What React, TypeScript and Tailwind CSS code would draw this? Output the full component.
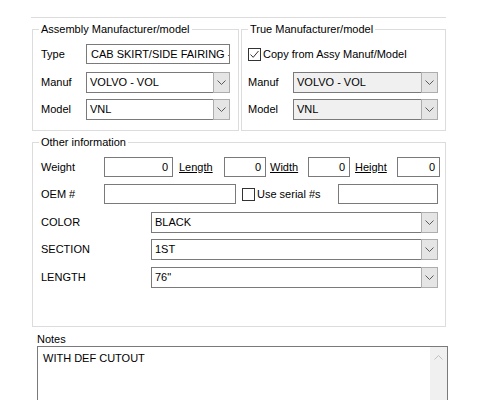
import type { ReactNode } from "react";

// Little down-chevron used by the combo buttons
function Chevron({ up = false }: { up?: boolean }) {
  return (
    <svg width="9" height="5" viewBox="0 0 9 5" className={up ? "rotate-180" : ""}>
      <path d="M0.5 0.5 L4.5 4.5 L8.5 0.5" fill="none" stroke="currentColor" strokeWidth="1" />
    </svg>
  );
}

function TextBox({ value = "", className = "", align = "left" }: { value?: string; className?: string; align?: "left" | "right" }) {
  return (
    <div
      className={`h-[20px] border border-[#7a7a7a] bg-white flex items-center px-[4px] whitespace-nowrap overflow-hidden ${
        align === "right" ? "justify-end" : ""
      } ${className}`}
    >
      {value}
    </div>
  );
}

function Combo({ value, className = "", disabled = false }: { value: string; className?: string; disabled?: boolean }) {
  return (
    <div
      className={`h-[21px] flex border border-[#7a7a7a] ${disabled ? "bg-[#f0f0f0]" : "bg-white"} ${className}`}
    >
      <div className="flex-1 flex items-center px-[3px] whitespace-nowrap overflow-hidden">{value}</div>
      <div className="w-[17px] -my-px -mr-px border border-[#adadad] bg-[#e5e5e5] text-[#5a5a5a] flex items-center justify-center">
        <Chevron />
      </div>
    </div>
  );
}

function Group({ title, className = "", children }: { title: string; className?: string; children: ReactNode }) {
  return (
    <fieldset className={`border border-[#dcdcdc] ${className}`}>
      <legend className="ml-[6px] px-[2px] leading-[14px]">{title}</legend>
      {children}
    </fieldset>
  );
}

function Check({ checked = false }: { checked?: boolean }) {
  return (
    <div className="w-[13px] h-[13px] border border-[#333] bg-white flex items-center justify-center shrink-0">
      {checked && (
        <svg width="11" height="11" viewBox="0 0 11 11">
          <path d="M1.5 5.5 L4.2 8.3 L9.5 2" fill="none" stroke="#333" strokeWidth="1" />
        </svg>
      )}
    </div>
  );
}

export default function App() {
  return (
    <div
      className="w-[500px] h-[400px] bg-white overflow-hidden text-[11px] text-black"
      style={{ fontFamily: '"Liberation Sans", Arial, sans-serif' }}
    >
      {/* top rule of the tab page */}
      <div className="mt-[17px] ml-[31px] w-[415px] h-px bg-[#dcdcdc]" />

      <div className="ml-[32px] mt-[4px] flex gap-[2px]">
        <Group title="Assembly Manufacturer/model" className="w-[207px] pb-[10px]">
          <div className="mt-[8px] flex items-center">
            <span className="ml-[8px] w-[45px]">Type</span>
            <TextBox value="CAB SKIRT/SIDE FAIRING -" className="w-[144px]" />
          </div>
          <div className="mt-[8px] flex items-center">
            <span className="ml-[8px] w-[45px]">Manuf</span>
            <Combo value="VOLVO - VOL" className="w-[144px]" />
          </div>
          <div className="mt-[6px] flex items-center">
            <span className="ml-[8px] w-[45px]">Model</span>
            <Combo value="VNL" className="w-[144px]" />
          </div>
        </Group>

        <Group title="True Manufacturer/model" className="w-[205px] pb-[10px]">
          <div className="mt-[8px] h-[20px] flex items-center ml-[6px] gap-[2px]">
            <Check checked />
            <span>Copy from Assy Manuf/Model</span>
          </div>
          <div className="mt-[8px] flex items-center">
            <span className="ml-[6px] w-[45px]">Manuf</span>
            <Combo value="VOLVO - VOL" className="w-[145px]" disabled />
          </div>
          <div className="mt-[6px] flex items-center">
            <span className="ml-[6px] w-[45px]">Model</span>
            <Combo value="VNL" className="w-[145px]" disabled />
          </div>
        </Group>
      </div>

      <Group title="Other information" className="ml-[32px] mt-[4px] w-[414px] pb-[38px]">
        <div className="mt-[8px] flex items-center">
          <span className="ml-[8px] w-[63px]">Weight</span>
          <TextBox value="0" align="right" className="w-[69px] h-[19px]" />
          <span className="ml-[6px] w-[45px] underline">Length</span>
          <TextBox value="0" align="right" className="w-[42px] h-[19px]" />
          <span className="ml-[4px] w-[38px] underline">Width</span>
          <TextBox value="0" align="right" className="w-[42px] h-[19px]" />
          <span className="ml-[5px] w-[42px] underline">Height</span>
          <TextBox value="0" align="right" className="w-[43px] h-[19px]" />
        </div>
        <div className="mt-[7px] flex items-center">
          <span className="ml-[8px] w-[63px]">OEM #</span>
          <TextBox className="w-[132px]" />
          <div className="ml-[6px] flex items-center gap-[2px] w-[96px]">
            <Check />
            <span>Use serial #s</span>
          </div>
          <TextBox className="w-[100px]" />
        </div>
        <div className="mt-[8px] flex items-center">
          <span className="ml-[8px] w-[110px]">COLOR</span>
          <Combo value="BLACK" className="w-[287px] h-[20px]" />
        </div>
        <div className="mt-[6px] flex items-center">
          <span className="ml-[8px] w-[110px]">SECTION</span>
          <Combo value="1ST" className="w-[287px]" />
        </div>
        <div className="mt-[7px] flex items-center">
          <span className="ml-[8px] w-[110px]">LENGTH</span>
          <Combo value={'76"'} className="w-[287px]" />
        </div>
      </Group>

      <div className="ml-[37px] mt-[6px] leading-[13px]">Notes</div>
      <div className="ml-[37px] w-[411px] h-[80px] border border-[#7a7a7a] border-b-0 flex">
        <div className="flex-1 px-[5px] pt-[3px]">WITH DEF CUTOUT</div>
        <div className="w-[17px] bg-[#f0f0f0] text-[#c0c0c0] flex justify-center pt-[8px]">
          <Chevron up />
        </div>
      </div>
    </div>
  );
}
